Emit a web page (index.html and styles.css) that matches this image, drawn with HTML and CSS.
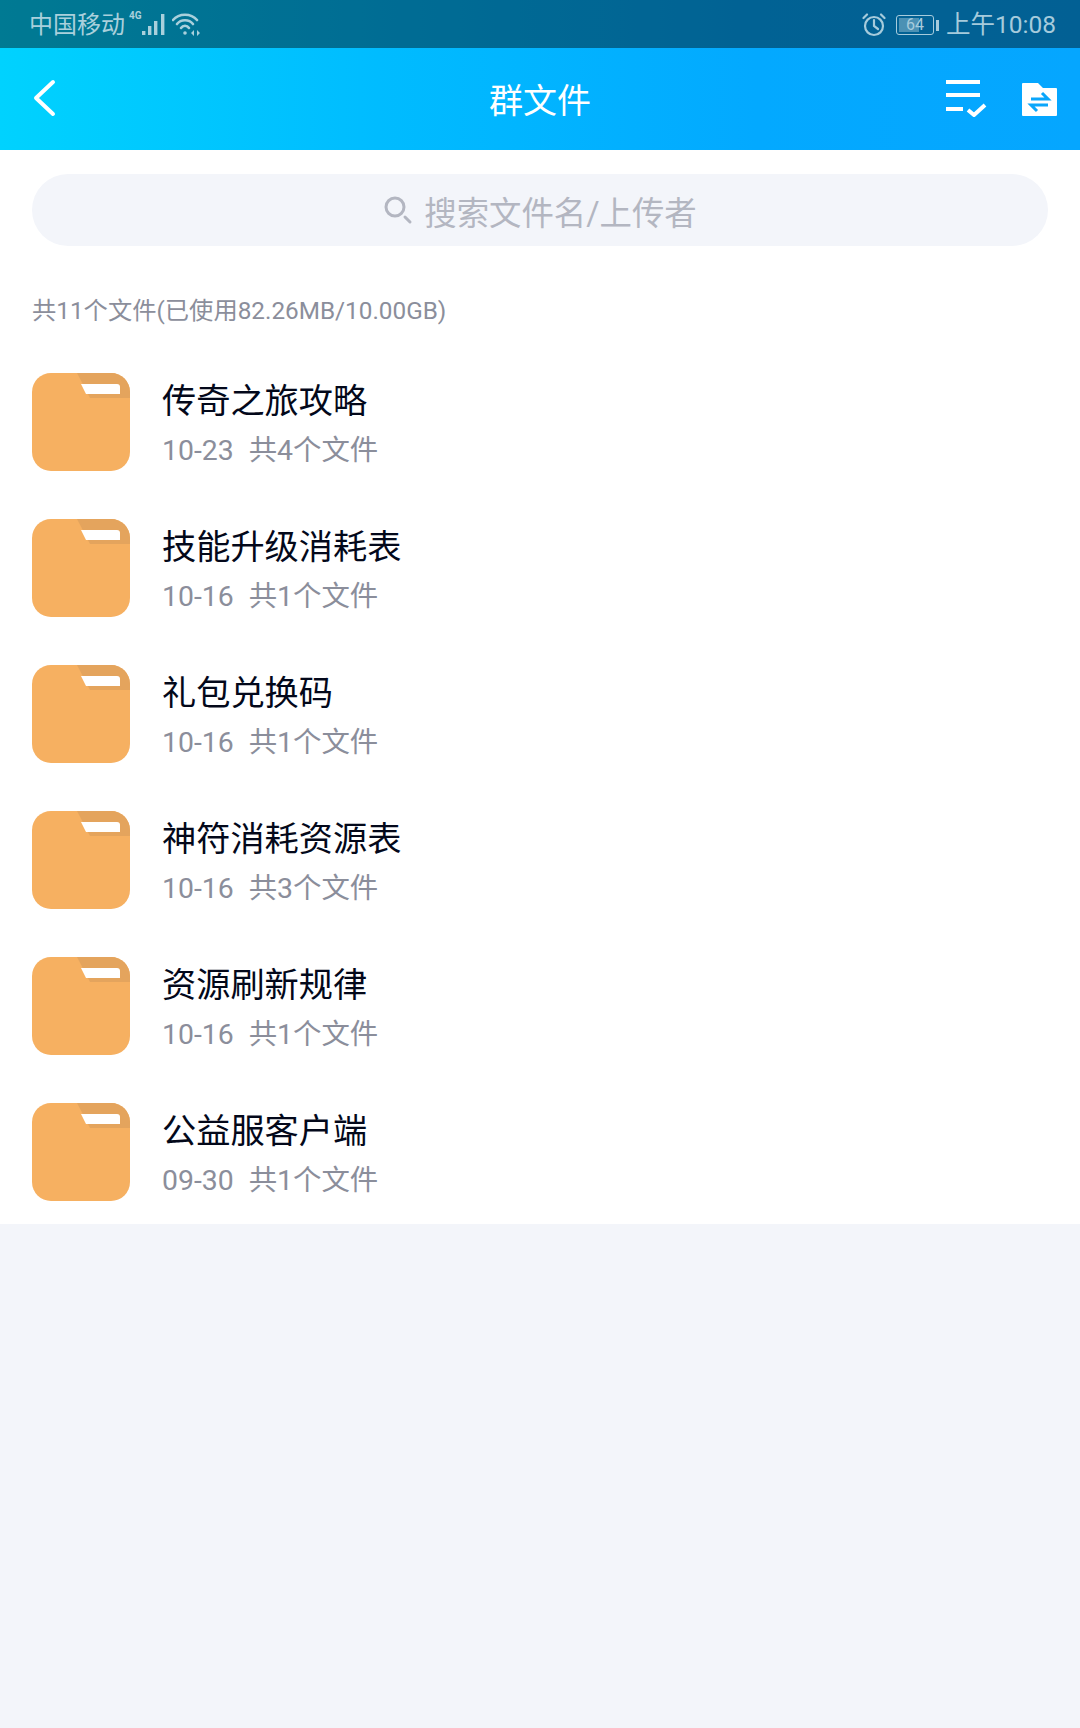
FILE: index.html
```html
<!DOCTYPE html>
<html lang="zh">
<head>
  <meta charset="utf-8">
  <title>群文件</title>
  <meta name="viewport" content="width=device-width, initial-scale=1.0">
  <link rel="stylesheet" href="styles.css">
</head>
<body>
  <svg class="defs" width="0" height="0">
    <symbol id="folder" viewBox="0 0 98 98">
      <rect width="98" height="98" rx="19" fill="#f6b061"/>
      <path d="M45 0H79A19 19 0 0 1 98 19V25H58Z" fill="#e4a45d"/>
      <path d="M49 11H85A3 3 0 0 1 88 14V21H54Z" fill="#fff"/>
    </symbol>
  </svg>

  <div class="top">
    <div class="status">
      <div class="status-left">
        <span>中国移动</span>
        <span class="net">4G</span>
        <svg class="signal" width="26" height="24" viewBox="0 0 26 24" fill="#a9d0dc">
          <rect x="1" y="18" width="3.4" height="4"/>
          <rect x="7" y="13" width="3.4" height="9"/>
          <rect x="13" y="8" width="3.4" height="14"/>
          <rect x="20" y="1" width="3.4" height="21"/>
        </svg>
        <svg class="wifi" width="28" height="24" viewBox="0 0 28 24" fill="none" stroke="#a9d0dc" stroke-width="2.6" stroke-linecap="round">
          <path d="M1 7C7 0 19 0 25 7"/>
          <path d="M5 11C9 6 17 6 21 11"/>
          <path d="M9 15C11 12 15 12 17 15"/>
          <circle cx="13" cy="20" r="1.8" fill="#a9d0dc" stroke="none"/>
          <path d="M19 20L22 17V23ZM28 20L25 17V23Z" fill="#a9d0dc" stroke="none"/>
        </svg>
      </div>
      <div class="status-right">
        <svg width="24" height="24" viewBox="0 0 24 24" fill="none" stroke="#a6cbdc" stroke-width="2.2" stroke-linecap="round">
          <circle cx="12" cy="13" r="9"/>
          <path d="M12 7V13L16 16"/>
          <path d="M1.5 5L5 1.5M22.5 5L19 1.5"/>
        </svg>
        <div class="battery">
          <div class="battery-box">
            <div class="battery-fill"></div>
            <span class="battery-num">64</span>
          </div>
          <div class="battery-tip"></div>
        </div>
        <span class="clock">上午10:08</span>
      </div>
    </div>

    <div class="header">
      <svg class="back" width="24" height="38" viewBox="0 0 24 38" fill="none" stroke="#fff" stroke-width="4" stroke-linecap="round" stroke-linejoin="round">
        <path d="M20 3L3 19L20 35"/>
      </svg>
      <div class="title">群文件</div>
      <div class="actions">
        <svg width="42" height="38" viewBox="0 0 42 38" fill="none" stroke="#fff" stroke-width="4">
          <path d="M1 2H35M1 15H35M1 29H18"/>
          <path d="M23 30L29 35L40 25" stroke-linejoin="round"/>
        </svg>
        <svg width="36" height="34" viewBox="0 0 36 34">
          <path d="M1 2A1 1 0 0 1 2 1H17L22 6H35A1 1 0 0 1 36 7V33A1 1 0 0 1 35 34H2A1 1 0 0 1 1 33Z" fill="#fff"/>
          <path d="M10 17H27L21 11M27 23H10L16 29" fill="none" stroke="#0aa6fb" stroke-width="3"/>
        </svg>
      </div>
    </div>
  </div>

  <div class="content">
    <div class="search">
      <svg width="30" height="30" viewBox="0 0 30 30" fill="none" stroke="#b3b6c1" stroke-width="3" stroke-linecap="round">
        <circle cx="12" cy="12" r="9"/>
        <path d="M22 22L27 27"/>
      </svg>
      <span>搜索文件名/上传者</span>
    </div>

    <div class="count">共11个文件(已使用82.26MB/10.00GB)</div>

    <div class="list">
      <div class="row">
        <svg class="folder" width="98" height="98"><use href="#folder"/></svg>
        <div class="info">
          <div class="name">传奇之旅攻略</div>
          <div class="meta"><span>10-23</span><span>共4个文件</span></div>
        </div>
      </div>
      <div class="row">
        <svg class="folder" width="98" height="98"><use href="#folder"/></svg>
        <div class="info">
          <div class="name">技能升级消耗表</div>
          <div class="meta"><span>10-16</span><span>共1个文件</span></div>
        </div>
      </div>
      <div class="row">
        <svg class="folder" width="98" height="98"><use href="#folder"/></svg>
        <div class="info">
          <div class="name">礼包兑换码</div>
          <div class="meta"><span>10-16</span><span>共1个文件</span></div>
        </div>
      </div>
      <div class="row">
        <svg class="folder" width="98" height="98"><use href="#folder"/></svg>
        <div class="info">
          <div class="name">神符消耗资源表</div>
          <div class="meta"><span>10-16</span><span>共3个文件</span></div>
        </div>
      </div>
      <div class="row">
        <svg class="folder" width="98" height="98"><use href="#folder"/></svg>
        <div class="info">
          <div class="name">资源刷新规律</div>
          <div class="meta"><span>10-16</span><span>共1个文件</span></div>
        </div>
      </div>
      <div class="row">
        <svg class="folder" width="98" height="98"><use href="#folder"/></svg>
        <div class="info">
          <div class="name">公益服客户端</div>
          <div class="meta"><span>09-30</span><span>共1个文件</span></div>
        </div>
      </div>
    </div>
  </div>
</body>
</html>
```

FILE: styles.css
```css
* {
  box-sizing: border-box;
}

body {
  margin: 0;
  width: 1080px;
  height: 1728px;
  overflow: hidden;
  background: #f3f5fa;
  font-family: Roboto, "Noto Sans CJK SC", sans-serif;
}

.defs {
  display: block;
  height: 0;
}

.top {
  background: linear-gradient(90deg, #00d2fe 0%, #00bcff 35%, #03a9ff 70%, #05a6ff 100%);
}

.status {
  height: 48px;
  padding: 2px 24px 0 29px;
  display: flex;
  justify-content: space-between;
  align-items: center;
  background: rgba(0, 0, 0, 0.42);
  color: #a9d0dc;
  font-size: 24px;
  line-height: 46px;
}

.status-left {
  display: flex;
  align-items: center;
}

.net {
  font-size: 10px;
  line-height: 12px;
  font-weight: 700;
  margin: -18px 0 0 4px;
}

.signal {
  margin-left: -1px;
}

.wifi {
  margin-left: 5px;
}

.status-right {
  display: flex;
  align-items: center;
  color: #a6cbdc;
}

.battery {
  display: flex;
  align-items: center;
  margin: 0 7px 0 10px;
}

.battery-box {
  width: 38px;
  height: 20px;
  border: 1px solid #a6cbdc;
  border-radius: 3px;
  padding: 2px;
  position: relative;
}

.battery-fill {
  width: 64%;
  height: 100%;
  background: rgba(166, 203, 220, 0.45);
}

.battery-num {
  position: absolute;
  top: 0;
  left: 0;
  right: 0;
  text-align: center;
  font-size: 16px;
  line-height: 18px;
}

.battery-tip {
  width: 3px;
  height: 11px;
  margin-left: 2px;
  background: #a6cbdc;
}

.clock {
  font-size: 24.5px;
}

.header {
  height: 102px;
  padding: 0 23px 0 33px;
  display: flex;
  align-items: center;
  position: relative;
  color: #fff;
}

.back {
  margin-top: -2px;
}

.title {
  position: absolute;
  top: 2px;
  left: 0;
  right: 0;
  text-align: center;
  font-size: 34px;
  line-height: 102px;
}

.actions {
  margin-left: auto;
  display: flex;
  align-items: center;
  gap: 34px;
}

.content {
  background: #fff;
  padding: 24px 32px 23px;
}

.search {
  height: 72px;
  border-radius: 36px;
  background: #f3f5fa;
  display: flex;
  justify-content: center;
  align-items: center;
  gap: 11px;
  color: #b3b6c1;
  font-size: 32.4px;
}

.count {
  margin-top: 48px;
  font-size: 24.3px;
  line-height: 34px;
  color: #8b8e9b;
}

.list {
  margin-top: 45px;
  display: flex;
  flex-direction: column;
  gap: 48px;
}

.row {
  display: flex;
  align-items: center;
  gap: 32px;
}

.folder {
  flex: none;
}

.info {
  padding-top: 4px;
}

.name {
  font-size: 34.2px;
  line-height: 48px;
  color: #03081a;
}

.meta {
  display: flex;
  gap: 15px;
  margin-top: 6px;
  font-size: 28.4px;
  line-height: 40px;
  color: #8b8e9b;
}
```
